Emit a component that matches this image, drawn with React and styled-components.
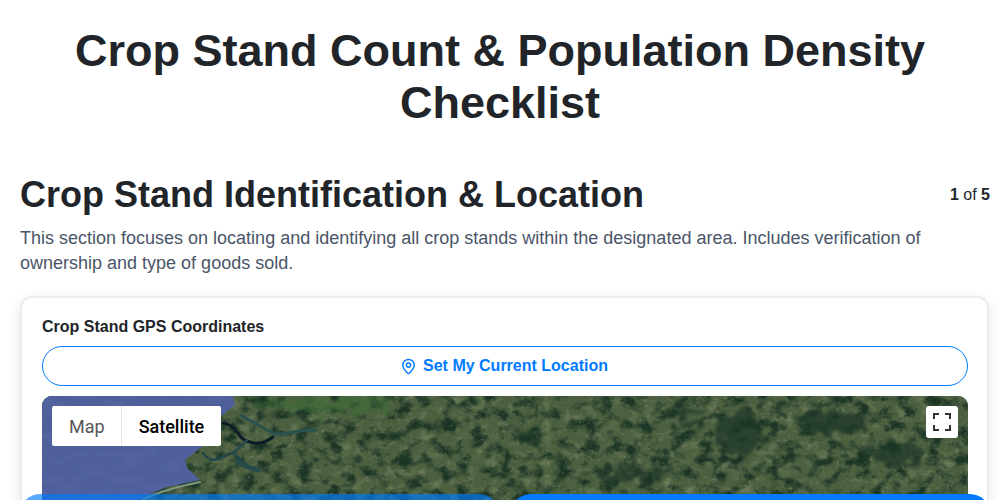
import React, { useState } from 'react';
import styled, { createGlobalStyle } from 'styled-components';
import { MapPin } from 'lucide-react';

const GlobalStyle = createGlobalStyle`
  html, body {
    margin: 0;
    padding: 0;
    height: 100%;
    overflow: hidden;
    background: #fff;
  }
  * { box-sizing: border-box; }
  body {
    font-family: "Liberation Sans", Arial, sans-serif;
    color: #212529;
  }
`;

const Page = styled.div`
  padding: 25px 10px 0 20px;
`;

const Title = styled.h1`
  margin: 0 0 44px;
  padding: 0 30px 0 20px;
  font-size: 45px;
  line-height: 52px;
  font-weight: 700;
  text-align: center;
  color: #212529;
`;

const SectionHeader = styled.div`
  display: flex;
  justify-content: space-between;
  align-items: flex-start;
`;

const SectionTitle = styled.h2`
  margin: 0;
  font-size: 36px;
  line-height: 43px;
  font-weight: 700;
  color: #212529;
`;

const Pager = styled.div`
  font-size: 16px;
  line-height: 24px;
  padding-top: 10px;
  color: #212529;

  b { font-weight: 700; }
`;

const Description = styled.p`
  margin: 10px 10px 20px 0;
  font-size: 18px;
  line-height: 25.2px;
  color: #4a5568;
`;

const Card = styled.section`
  width: 969px;
  padding: 19px 20px 0;
  background: #fff;
  border: 2px solid #ebebf0;
  border-radius: 12px;
  box-shadow: 0 4px 14px rgba(0, 0, 0, 0.1);
`;

const FieldLabel = styled.label`
  display: block;
  margin-bottom: 10px;
  font-size: 16px;
  line-height: 19px;
  font-weight: 700;
  color: #212529;
`;

const LocationButton = styled.button`
  display: flex;
  align-items: center;
  justify-content: center;
  gap: 6px;
  width: 926px;
  height: 40px;
  padding: 0 2px 0 0;
  background: #fff;
  border: 1px solid #007bff;
  border-radius: 20px;
  font-family: inherit;
  font-size: 16px;
  font-weight: 700;
  color: #007bff;
`;

const MapFrame = styled.div`
  position: relative;
  width: 926px;
  height: 300px;
  margin-top: 10px;
  border-radius: 10px;
  overflow: hidden;
  background: #4b5f3d;
`;

const MapDrawing = styled.svg`
  display: block;
  width: 926px;
  height: 300px;
`;

const MapTypes = styled.div`
  position: absolute;
  top: 10px;
  left: 10px;
  display: flex;
  height: 40px;
  background: #fff;
  border-radius: 2px;
`;

const MapType = styled.button`
  height: 40px;
  padding: ${(p) => (p.$first ? '0 16px 0 17px' : '0 17px')};
  background: none;
  border: 0;
  border-left: ${(p) => (p.$first ? '0' : '1px solid #e6e6e6')};
  font-family: Roboto, sans-serif;
  font-size: 18px;
  font-weight: ${(p) => (p.$active ? 500 : 400)};
  color: ${(p) => (p.$active ? '#000' : '#565656')};
`;

const FullscreenButton = styled.button`
  position: absolute;
  top: 10px;
  right: 10px;
  display: flex;
  align-items: center;
  justify-content: center;
  width: 32px;
  height: 32px;
  padding: 0;
  background: #fff;
  border: 0;
  border-radius: 3px;
`;

const BottomBar = styled.div`
  position: fixed;
  top: 494px;
  left: 20px;
  display: flex;
  gap: 12px;
`;

const BottomButton = styled.div`
  width: 479px;
  height: 48px;
  border-radius: 20px;
  background: #007bff;
  opacity: ${(p) => (p.$muted ? 0.65 : 1)};
`;

const SatelliteMap = () => (
  <MapDrawing viewBox="0 0 926 300" aria-hidden="true">
    <defs>
      <filter id="fields" x="0" y="0" width="100%" height="100%" colorInterpolationFilters="sRGB">
        <feTurbulence type="fractalNoise" baseFrequency="0.09 0.11" numOctaves="4" seed="11" />
        <feColorMatrix
          type="matrix"
          values="0 0 0 0 0.44  0 0 0 0 0.5  0 0 0 0 0.36  1.5 1.5 0 0 -1.5"
        />
        <feGaussianBlur stdDeviation="0.5" />
      </filter>
      <filter id="forest" x="0" y="0" width="100%" height="100%" colorInterpolationFilters="sRGB">
        <feTurbulence type="fractalNoise" baseFrequency="0.07 0.085" numOctaves="5" seed="4" />
        <feColorMatrix
          type="matrix"
          values="0 0 0 0 0.11  0 0 0 0 0.21  0 0 0 0 0.15  0 3.6 0 0 -1.65"
        />
        <feGaussianBlur stdDeviation="0.5" />
      </filter>
      <filter id="speckle" x="0" y="0" width="100%" height="100%" colorInterpolationFilters="sRGB">
        <feTurbulence type="fractalNoise" baseFrequency="0.35" numOctaves="2" seed="7" />
        <feColorMatrix
          type="matrix"
          values="0 0 0 0 0.6  0 0 0 0 0.6  0 0 0 0 0.5  0 0 2 0 -1.3"
        />
        <feGaussianBlur stdDeviation="0.4" />
      </filter>
      <filter id="ripple" x="0" y="0" width="100%" height="100%" colorInterpolationFilters="sRGB">
        <feTurbulence type="fractalNoise" baseFrequency="0.05 0.16" numOctaves="2" seed="3" />
        <feColorMatrix
          type="matrix"
          values="0 0 0 0 0.38  0 0 0 0 0.45  0 0 0 0 0.68  2 0 0 0 -0.9"
        />
      </filter>
      <filter id="patch" x="-30%" y="-60%" width="160%" height="220%" colorInterpolationFilters="sRGB">
        <feTurbulence type="fractalNoise" baseFrequency="0.08" numOctaves="3" seed="9" result="n" />
        <feDisplacementMap in="SourceGraphic" in2="n" scale="30" xChannelSelector="R" yChannelSelector="G" />
        <feGaussianBlur stdDeviation="1.5" />
      </filter>
      <filter id="soft">
        <feGaussianBlur stdDeviation="0.6" />
      </filter>
      <clipPath id="land">
        <path d="M191 0H926V300H0V110H90L101 101L125 91L158 84L145 72L143 64L158 52L171 44L178 21L193 9Z" />
      </clipPath>
      <clipPath id="sea">
        <path d="M0 0H191L193 9L178 21L171 44L158 52L143 64L145 72L158 84L125 91L101 101L90 110V300H0Z" />
      </clipPath>
    </defs>
    <rect width="926" height="300" fill="#4c6040" />
    <rect width="926" height="300" filter="url(#fields)" />
    <rect width="926" height="300" filter="url(#forest)" />
    <rect width="926" height="300" filter="url(#speckle)" />
    <g filter="url(#patch)" fill="#1c3628" opacity="0.7">
      <ellipse cx="698" cy="38" rx="24" ry="24" />
      <ellipse cx="790" cy="27" rx="32" ry="12" />
      <ellipse cx="850" cy="58" rx="32" ry="10" />
      <ellipse cx="588" cy="78" rx="46" ry="6" />
      <ellipse cx="488" cy="41" rx="12" ry="5" />
      <ellipse cx="645" cy="18" rx="20" ry="6" />
      <ellipse cx="400" cy="30" rx="12" ry="4" />
    </g>
    <path d="M205 0H350L340 16L260 18L215 10Z" fill="#3c6c36" opacity="0.6" filter="url(#patch)" />
    <rect width="926" height="300" fill="#4f5f9c" clipPath="url(#sea)" />
    <rect width="926" height="300" filter="url(#ripple)" clipPath="url(#sea)" opacity="0.45" />
    <g clipPath="url(#land)" fill="none" strokeLinecap="round" strokeLinejoin="round" filter="url(#soft)">
      <path d="M199 19C205 24 212 26 218 30C226 35 232 39 240 38C252 36 262 34 274 34" stroke="#2a5250" strokeWidth="3" />
      <path d="M181 27C188 28 192 31 196 37C199 43 204 46 212 47C220 48 226 45 231 41" stroke="#101f26" strokeWidth="3" />
      <path d="M205 44C200 50 196 52 191 57" stroke="#27494c" strokeWidth="2.5" />
      <path d="M161 57C165 62 168 64 172 64C180 62 186 58 191 57C197 62 202 68 210 72" stroke="#244648" strokeWidth="2.5" />
      <path d="M196 66C202 70 208 72 216 74" stroke="#284c4c" strokeWidth="5" />
      <path d="M158 86C138 90 118 95 100 104" stroke="#7f9a80" strokeWidth="2" />
    </g>
  </MapDrawing>
);

const App = () => {
  const [mapType, setMapType] = useState('satellite');

  return (
    <>
      <GlobalStyle />
      <Page>
        <Title>Crop Stand Count &amp; Population Density Checklist</Title>
        <SectionHeader>
          <SectionTitle>Crop Stand Identification &amp; Location</SectionTitle>
          <Pager>
            <b>1</b> of <b>5</b>
          </Pager>
        </SectionHeader>
        <Description>
          This section focuses on locating and identifying all crop stands within the designated
          area. Includes verification of ownership and type of goods sold.
        </Description>
        <Card>
          <FieldLabel>Crop Stand GPS Coordinates</FieldLabel>
          <LocationButton type="button">
            <MapPin size={17} strokeWidth={2} />
            Set My Current Location
          </LocationButton>
          <MapFrame>
            <SatelliteMap />
            <MapTypes>
              <MapType $first $active={mapType === 'map'} onClick={() => setMapType('map')}>
                Map
              </MapType>
              <MapType $active={mapType === 'satellite'} onClick={() => setMapType('satellite')}>
                Satellite
              </MapType>
            </MapTypes>
            <FullscreenButton type="button" aria-label="Toggle fullscreen view">
              <svg width="18" height="18" viewBox="0 0 18 18" fill="#333">
                <path d="M0 0h6v2H2v4H0zM12 0h6v6h-2V2h-4zM0 12h2v4h4v2H0zM16 12h2v6h-6v-2h4z" />
              </svg>
            </FullscreenButton>
          </MapFrame>
        </Card>
      </Page>
      <BottomBar>
        <BottomButton $muted />
        <BottomButton />
      </BottomBar>
    </>
  );
};

export default App;
